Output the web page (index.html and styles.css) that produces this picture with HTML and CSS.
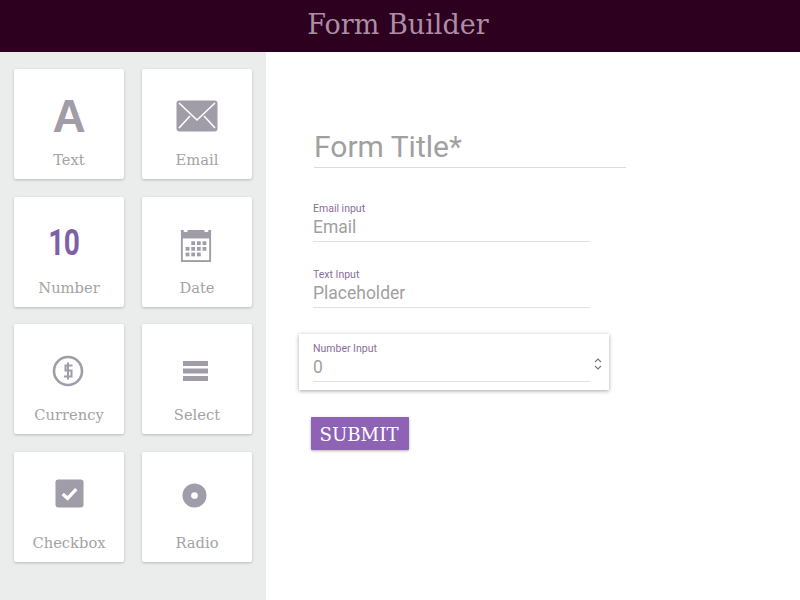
FILE: index.html
```html
<!DOCTYPE html>
<html lang="en">
<head>
    <meta charset="UTF-8">
    <title>Form Builder</title>
    <link rel="stylesheet" href="styles.css">
</head>
<body>
    <header class="topbar">Form Builder</header>
    <div class="layout">
        <aside class="palette">
            <div class="tile">
                <div class="tile-icon"><span class="glyph-a">A</span></div>
                <div class="tile-label">Text</div>
            </div>
            <div class="tile">
                <div class="tile-icon">
                    <svg width="42" height="32" viewBox="0 0 42 32">
                        <rect x="0.5" y="0.5" width="41" height="31" rx="3" fill="#a09ca8"/>
                        <path d="M3 3 L21 20 L39 3 M3 28 L14 16 M39 28 L28 16" fill="none" stroke="#fff" stroke-width="1.6"/>
                    </svg>
                </div>
                <div class="tile-label">Email</div>
            </div>
            <div class="tile">
                <div class="tile-icon"><span class="glyph-num">10</span></div>
                <div class="tile-label">Number</div>
            </div>
            <div class="tile">
                <div class="tile-icon">
                    <svg class="icon-date" width="32" height="34" viewBox="0 0 34 36">
                        <path d="M1 1h3v2h4V1h18v2h4V1h3v34H1z" fill="#a09ca8"/>
                        <rect x="3" y="10" width="28" height="23" fill="#fff"/>
                        <g fill="#a09ca8">
                            <rect x="12" y="13" width="4" height="4"/><rect x="18" y="13" width="4" height="4"/><rect x="24" y="13" width="4" height="4"/>
                            <rect x="6" y="19" width="4" height="4"/><rect x="12" y="19" width="4" height="4"/><rect x="18" y="19" width="4" height="4"/><rect x="24" y="19" width="4" height="4"/>
                            <rect x="6" y="25" width="4" height="4"/><rect x="12" y="25" width="4" height="4"/><rect x="18" y="25" width="4" height="4"/>
                        </g>
                    </svg>
                </div>
                <div class="tile-label">Date</div>
            </div>
            <div class="tile">
                <div class="tile-icon">
                    <svg class="icon-currency" width="32" height="32" viewBox="0 0 32 32">
                        <circle cx="16" cy="16" r="14" fill="none" stroke="#a09ca8" stroke-width="2.6"/>
                        <path d="M20.5 10.5H13.5V15.5H19.5V21.5H12M16 7.5V24.5" fill="none" stroke="#a09ca8" stroke-width="2"/>
                    </svg>
                </div>
                <div class="tile-label">Currency</div>
            </div>
            <div class="tile">
                <div class="tile-icon">
                    <svg class="icon-select" width="25" height="22" viewBox="0 0 25 22">
                        <rect y="1" width="25" height="5" fill="#a09ca8"/>
                        <rect y="8.500" width="25" height="5" fill="#a09ca8"/>
                        <rect y="16" width="25" height="5" fill="#a09ca8"/>
                    </svg>
                </div>
                <div class="tile-label">Select</div>
            </div>
            <div class="tile">
                <div class="tile-icon">
                    <svg class="icon-checkbox" width="29" height="29" viewBox="0 0 30 30">
                        <rect x="0.500" y="0.500" width="29" height="29" rx="3" fill="#a09ca8"/>
                        <path d="M8 15.500L13 20L22 10.500" fill="none" stroke="#fff" stroke-width="3.500"/>
                    </svg>
                </div>
                <div class="tile-label">Checkbox</div>
            </div>
            <div class="tile">
                <div class="tile-icon">
                    <svg class="icon-radio" width="25" height="25" viewBox="0 0 26 26">
                        <circle cx="13" cy="13" r="12.500" fill="#a09ca8"/>
                        <circle cx="13" cy="13" r="3.500" fill="#fff"/>
                    </svg>
                </div>
                <div class="tile-label">Radio</div>
            </div>
        </aside>
        <main class="canvas">
            <div class="form-title">Form Title*</div>
            <div class="field">
                <div class="field-label">Email input</div>
                <div class="field-value">Email</div>
            </div>
            <div class="field">
                <div class="field-label">Text Input</div>
                <div class="field-value">Placeholder</div>
            </div>
            <div class="field field-active">
                <div class="field-label">Number Input</div>
                <div class="field-value">0</div>
                <svg class="spinner" width="8" height="14" viewBox="0 0 8 14">
                    <path d="M1 5L4 2L7 5M1 9L4 12L7 9" fill="none" stroke="#777" stroke-width="1.100"/>
                </svg>
            </div>
            <button class="submit">SUBMIT</button>
        </main>
    </div>
</body>
</html>
```
FILE: styles.css
```css
html, body {
    margin: 0;
    height: 100%;
    overflow: hidden;
}
body {
    font-family: "DejaVu Serif", serif;
    background: #fff;
}
.topbar {
    height: 52px;
    line-height: 50px;
    padding-right: 4px;
    box-sizing: border-box;
    background: #2c001e;
    color: #ad8ea6;
    text-align: center;
    font-size: 27px;
}
.layout {
    display: flex;
    height: 548px;
}
.palette {
    width: 266px;
    box-sizing: border-box;
    padding: 17px 14px 0;
    background: #ebeded;
    display: grid;
    grid-template-columns: 110px 110px;
    grid-auto-rows: 110px;
    column-gap: 18px;
    row-gap: 17.670px;
}
.tile {
    background: #fff;
    border-radius: 2px;
    box-shadow: 0 1px 3px rgba(0, 0, 0, 0.22);
    display: flex;
    flex-direction: column;
    align-items: center;
}
.tile-icon {
    height: 50px;
    margin-top: 22px;
    display: flex;
    align-items: center;
    justify-content: center;
}
.tile-label {
    margin-top: 9px;
    color: #a3a3a3;
    font-size: 14.700px;
    line-height: 20px;
}
.glyph-a {
    font-family: "Liberation Sans", sans-serif;
    font-weight: bold;
    font-size: 46px;
    color: #a09ca8;
}
.glyph-num {
    font-family: "Roboto", sans-serif;
    font-weight: 700;
    font-size: 36px;
    letter-spacing: -1px;
    color: #7f5fa6;
    transform: scaleX(0.78);
    margin: 0 11px 2px 0;
}
.icon-date {
    margin: 4px 2px 0 0;
}
.icon-currency,
.icon-select {
    margin-right: 3px;
}
.icon-checkbox {
    margin-bottom: 10px;
}
.icon-radio {
    margin: 0 5px 6px 0;
}
.canvas {
    flex: 1;
    padding: 73px 0 0 33px;
    font-family: "Roboto", sans-serif;
}
.form-title {
    width: 312px;
    margin-left: 15px;
    height: 42px;
    border-bottom: 1px solid #dcdcdc;
    color: #a0a0a0;
    font-size: 30px;
    line-height: 44px;
}
.field {
    position: relative;
    box-sizing: border-box;
    width: 277px;
    margin-left: 14px;
    height: 40px;
    margin-top: 26px;
    border-bottom: 1px solid #e0e0e0;
}
.form-title + .field {
    margin-top: 34px;
}
.field-label {
    color: #8a6d99;
    font-size: 10.500px;
    line-height: 12px;
    padding-top: 1px;
    margin-bottom: -1px;
}
.field-value {
    color: #a0a0a0;
    font-size: 17.500px;
    line-height: 26px;
}
.field-active {
    margin-top: 26px;
    height: auto;
    width: 310px;
    margin-left: 0;
    padding: 8px 19px 8px 14px;
    border-bottom: 0;
    background: #fff;
    box-shadow: 0 1px 4px rgba(0, 0, 0, 0.35);
}
.field-active .field-value {
    border-bottom: 1px solid #e0e0e0;
    height: 27px;
}
.spinner {
    position: absolute;
    right: 7px;
    top: 23px;
}
.submit {
    display: block;
    margin: 27px 0 0 12px;
    width: 98px;
    height: 33px;
    padding: 2px 2px 0 0;
    border: 0;
    border-radius: 1px;
    background: #8e63b5;
    color: #fff;
    font-family: "DejaVu Serif", serif;
    font-size: 18.200px;
    box-shadow: 0 1px 3px rgba(0, 0, 0, 0.3);
}
```
